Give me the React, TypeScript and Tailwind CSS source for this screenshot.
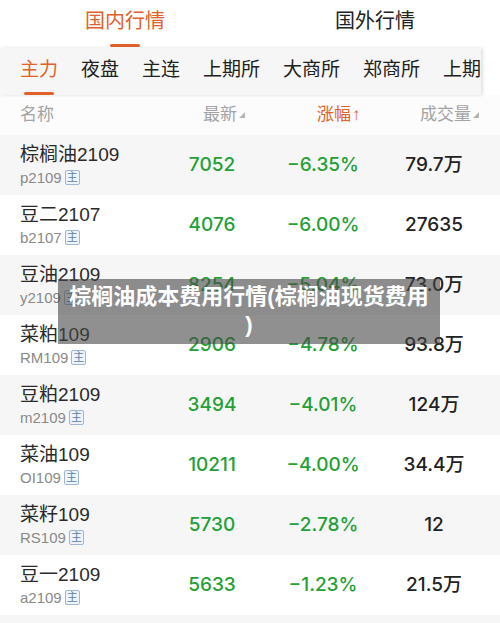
import React from "react";

const rows = [
  { name: "棕榈油2109", code: "p2109", last: "7052", chg: "−6.35%", vol: "79.7万" },
  { name: "豆二2107", code: "b2107", last: "4076", chg: "−6.00%", vol: "27635" },
  { name: "豆油2109", code: "y2109", last: "8254", chg: "−5.04%", vol: "73.0万" },
  { name: "菜粕109", code: "RM109", last: "2906", chg: "−4.78%", vol: "93.8万" },
  { name: "豆粕2109", code: "m2109", last: "3494", chg: "−4.01%", vol: "124万" },
  { name: "菜油109", code: "OI109", last: "10211", chg: "−4.00%", vol: "34.4万" },
  { name: "菜籽109", code: "RS109", last: "5730", chg: "−2.78%", vol: "12" },
  { name: "豆一2109", code: "a2109", last: "5633", chg: "−1.23%", vol: "21.5万" },
  { name: "棕榈油2201", code: "p2201", last: "7001", chg: "−1.10%", vol: "5.2万" },
];

const font = { fontFamily: '"Liberation Sans", "Noto Sans CJK SC", sans-serif' };
const numFont = { fontFamily: 'Inter, "Liberation Sans", "Noto Sans CJK SC", sans-serif' };

function SortMark() {
  return (
    <svg width="6" height="6" viewBox="0 0 6 6" className="ml-[2px] mt-[10px] shrink-0">
      <path d="M6 0 L6 6 L0 6 Z" fill="#b5b5b5" />
    </svg>
  );
}

export default function App() {
  const tabs = ["主力", "夜盘", "主连", "上期所", "大商所", "郑商所", "上期所"];
  return (
    <div className="w-[500px] h-[623px] overflow-hidden bg-white relative" style={font}>
      {/* top tabs */}
      <div className="flex h-[48px]">
        <div className="w-1/2 flex flex-col items-center pt-[8px]">
          <span className="text-[20px] leading-[26px] text-[#e0622a]">国内行情</span>
          <span className="mt-[10px] w-[30px] h-[3px] rounded-full bg-[#e0622a]" />
        </div>
        <div className="w-1/2 flex flex-col items-center pt-[8px]">
          <span className="text-[20px] leading-[26px] text-[#222]">国外行情</span>
        </div>
      </div>
      {/* sub tabs */}
      <div className="flex h-[47px]">
        <div className="w-[481px] h-full bg-[#f6f6f6] overflow-hidden flex pl-[20px] gap-[23px] whitespace-nowrap shadow-[2px_0_3px_rgba(0,0,0,0.12)]">
          {tabs.map((t, i) => (
            <div key={i} className="flex flex-col items-center pt-[10px] shrink-0">
              <span className={`text-[19px] leading-[24px] ${i === 0 ? "text-[#e0622a]" : "text-[#222]"}`}>{t}</span>
              {i === 0 && <span className="mt-[10px] w-[30px] h-[3px] rounded-full bg-[#e0622a]" />}
            </div>
          ))}
        </div>
      </div>
      {/* header */}
      <div className="flex h-[40px] items-center bg-[#fcfcfc] text-[17px] text-[#a3a3a3] whitespace-nowrap">
        <div className="w-[170px] shrink-0 pl-[20px]">名称</div>
        <div className="w-[84px] shrink-0 flex pl-[33px]">
          <span>最新</span>
          <SortMark />
        </div>
        <div className="w-[138px] shrink-0 flex pl-[63px] text-[#e0622a]">
          <span>涨幅</span>
          <span className="font-bold ml-[1px]">↑</span>
        </div>
        <div className="w-[100px] shrink-0 flex pl-[28px]">
          <span>成交量</span>
          <SortMark />
        </div>
      </div>
      {/* rows */}
      {rows.map((r, i) => (
        <div key={i} className={`flex h-[60px] items-center ${i % 2 === 0 ? "bg-[#f6f6f7]" : "bg-white"}`}>
          <div className="w-[170px] pl-[20px] flex flex-col">
            <span className="text-[19px] leading-[24px] text-[#2a2a2a]">{r.name}</span>
            <div className="flex items-center mt-[1px]">
              <span className="text-[15px] leading-[20px] text-[#8a8a8a]">{r.code}</span>
              <span className="ml-[3px] w-[15px] h-[15px] border border-[#9fb6cf] bg-[#eef4fa] rounded-[2px] text-[11px] leading-[13px] text-center text-[#5a7fa6]">主</span>
            </div>
          </div>
          <div style={numFont} className="w-[84px] text-center text-[19px] font-medium text-[#23a036]">{r.last}</div>
          <div style={numFont} className="w-[138px] text-center text-[19px] font-medium text-[#23a036]">{r.chg}</div>
          <div style={numFont} className="w-[84px] text-center text-[19px] font-medium text-[#222]">{r.vol}</div>
        </div>
      ))}
      {/* overlay caption */}
      <div className="absolute left-[58px] top-[279px] w-[382px] h-[65px] bg-[rgba(70,70,70,0.6)] px-[10px] pt-[4px] text-center text-white font-bold text-[22px] leading-[28px]">
        棕榈油成本费用行情(棕榈油现货费用
        <br />)
      </div>
    </div>
  );
}
